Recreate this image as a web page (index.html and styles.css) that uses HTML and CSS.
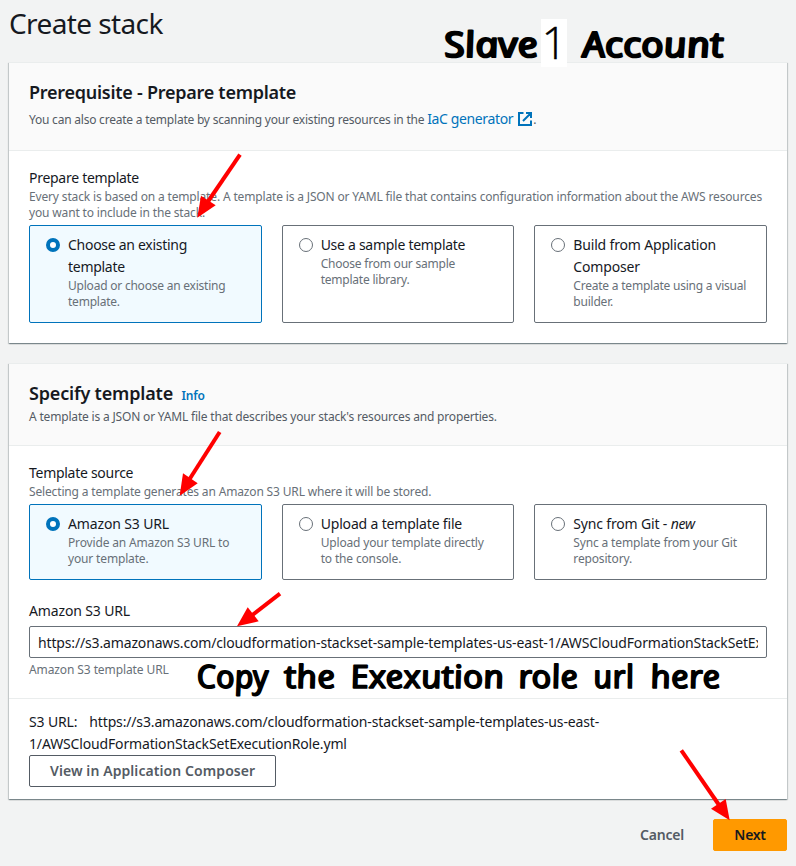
FILE: index.html
```html
<!DOCTYPE html>
<html lang="en">
<head>
<meta charset="utf-8">
<title>Create stack</title>
<link rel="stylesheet" href="styles.css">
</head>
<body>
<main class="page">
  <h1>Create stack</h1>

  <section class="panel">
    <header class="panel-header first">
      <h2>Prerequisite - Prepare template</h2>
      <p class="lead tall">You can also create a template by scanning your existing resources in the <a class="link">IaC generator</a><svg class="external" viewBox="0 0 16 16" width="16" height="16"><path d="M6.500 2H2v12h12V9.500M9 2h5v5M6 10 13.500 2.500"/></svg>.</p>
    </header>
    <div class="panel-body">
      <div class="label">Prepare template</div>
      <div class="hint intro">Every stack is based on a template. A template is a JSON or YAML file that contains configuration information about the AWS resources you want to include in the stack.</div>
      <div class="tiles">
        <label class="tile selected"><span class="radio"></span><span class="tile-text"><span class="tile-title">Choose an existing template</span><span class="hint">Upload or choose an existing template.</span></span></label>
        <label class="tile"><span class="radio"></span><span class="tile-text"><span class="tile-title">Use a sample template</span><span class="hint">Choose from our sample template library.</span></span></label>
        <label class="tile"><span class="radio"></span><span class="tile-text"><span class="tile-title wide">Build from Application Composer</span><span class="hint">Create a template using a visual builder.</span></span></label>
      </div>
    </div>
  </section>

  <section class="panel">
    <header class="panel-header">
      <h2 class="specify">Specify template <a class="info">Info</a></h2>
      <p class="lead">A template is a JSON or YAML file that describes your stack's resources and properties.</p>
    </header>
    <div class="panel-body">
      <div class="label">Template source</div>
      <div class="hint intro">Selecting a template generates an Amazon S3 URL where it will be stored.</div>
      <div class="tiles">
        <label class="tile selected"><span class="radio"></span><span class="tile-text"><span class="tile-title url">Amazon S3 URL</span><span class="hint intro">Provide an Amazon S3 URL to your template.</span></span></label>
        <label class="tile"><span class="radio"></span><span class="tile-text"><span class="tile-title wide">Upload a template file</span><span class="hint intro">Upload your template directly<br>to the console.</span></span></label>
        <label class="tile"><span class="radio"></span><span class="tile-text"><span class="tile-title wide">Sync from Git - <em>new</em></span><span class="hint intro">Sync a template from your Git repository.</span></span></label>
      </div>
      <div class="field">
        <div class="label url">Amazon S3 URL</div>
        <input class="input" type="text" value="https://s3.amazonaws.com/cloudformation-stackset-sample-templates-us-east-1/AWSCloudFormationStackSetExecutionRole.yml">
        <div class="hint note">Amazon S3 template URL</div>
      </div>
    </div>
    <footer class="panel-footer">
      <div class="s3"><span class="s3-label">S3 URL:</span>https://s3.amazonaws.com/cloudformation-stackset-sample-templates-us-east-<br>1/AWSCloudFormationStackSetExecutionRole.yml</div>
      <button class="button">View in Application Composer</button>
    </footer>
  </section>

  <div class="actions">
    <button class="button plain">Cancel</button>
    <button class="button primary">Next</button>
  </div>
</main>

<svg class="notes" viewBox="0 0 796 866" width="796" height="866">
  <rect x="541" y="19" width="26" height="48" fill="#fff"/>
  <g class="marker big">
    <text transform="translate(446 57) skewX(12)" textLength="94" lengthAdjust="spacingAndGlyphs">Slave</text>
    <text transform="translate(584 57) skewX(10)" textLength="141" lengthAdjust="spacingAndGlyphs">Account</text>
  </g>
  <text class="digit" x="541.500" y="59">1</text>
  <g class="marker">
    <text transform="translate(198 688) skewX(10)" textLength="72" lengthAdjust="spacingAndGlyphs">Copy</text>
    <text transform="translate(286 688) skewX(12)" textLength="51" lengthAdjust="spacingAndGlyphs">the</text>
    <text transform="translate(352 688) skewX(12)" textLength="154" lengthAdjust="spacingAndGlyphs">Exexution</text>
    <text transform="translate(520 688) skewX(12)" textLength="60" lengthAdjust="spacingAndGlyphs">role</text>
    <text transform="translate(595 688) skewX(12)" textLength="41" lengthAdjust="spacingAndGlyphs">url</text>
    <text transform="translate(652 688) skewX(12)" textLength="70" lengthAdjust="spacingAndGlyphs">here</text>
  </g>
  <g class="arrows">
    <path d="M240 154.700 207 203"/><polygon points="197.300,217.700 201,195.700 215.700,205.300"/>
    <path d="M219.700 432 189 480"/><polygon points="179.700,495.700 183,473.300 197.700,483.300"/>
    <path d="M280 593.700 251 616"/><polygon points="237,626.300 247.700,607.300 258.700,621.300"/>
    <path d="M681.300 750.300 719 805"/><polygon points="729.700,820.300 711,808.700 725.700,799"/>
  </g>
</svg>
</body>
</html>
```
FILE: styles.css
```css
* { box-sizing: border-box; }
body {
  margin: 0;
  background: #f2f3f3;
  color: #16191f;
  font: 14px/22px "Noto Sans", "Open Sans", sans-serif;
  letter-spacing: -0.28px;
}
.page { padding: 5px 9px 0; height: 866px; overflow: hidden; }
h1 { margin: 0 0 21px; font-size: 28px; line-height: 36px; font-weight: 400; letter-spacing: -0.6px; }
h2 { margin: 0; font-size: 18px; line-height: 22px; font-weight: 600; letter-spacing: -0.26px; }
h2.specify { height: 22px; letter-spacing: -0.18px; }
p { margin: 0; }

.panel {
  margin-bottom: 20px;
  background: #fff;
  border-top: 1px solid #eaeded;
  box-shadow: 0 1px 1px 0 rgba(0,28,36,.3), 1px 1px 1px 0 rgba(0,28,36,.15), -1px 1px 1px 0 rgba(0,28,36,.15);
}
.panel-header { padding: 18px 20px 20px; background: #fafafa; border-bottom: 1px solid #eaeded; }
.panel-header.first { padding-bottom: 19px; }
.lead { margin-top: 5px; font-size: 12px; line-height: 16px; color: #545b64; letter-spacing: -0.18px; }
.lead.tall { line-height: 22px; letter-spacing: -0.22px; }
.link { color: #0073bb; font-size: 14px; letter-spacing: -0.37px; }
.external { margin-left: 4px; vertical-align: -3px; fill: none; stroke: #0073bb; stroke-width: 2; }
.info { margin-left: 4px; color: #0073bb; font-size: 12px; font-weight: 600; }

.panel-body { padding: 16px 20px 20px; }
.hint { display: block; font-size: 12px; line-height: 16px; color: #687078; letter-spacing: -0.22px; }
.hint.intro { letter-spacing: -0.156px; }
.hint.note { letter-spacing: -0.1px; }
.tiles { display: grid; grid-template-columns: repeat(3, 1fr); gap: 20px; margin-top: 4px; }
.tile { display: flex; gap: 8px; padding: 8px 16px 12px; border: 1px solid #687078; border-radius: 2px; background: #fff; }
.tile.selected { border-color: #0073bb; background: #f1faff; }
.tile-text { flex: 1; }
.tile-title { display: block; }
.url { letter-spacing: -0.14px; }
.wide { letter-spacing: -0.17px; }
.radio { flex: none; width: 14px; height: 14px; margin-top: 4px; border: 1px solid #687078; border-radius: 50%; background: #fff; }
.selected .radio { border: 4px solid #0073bb; }

.field { margin-top: 20px; }
.input {
  display: block; width: 100%; height: 32px; margin: 4px 0; padding: 4px 8px;
  border: 1px solid #687078; border-radius: 2px; background: #fff;
  color: inherit; font: inherit; letter-spacing: -0.15px;
}
.panel-footer { padding: 12px 20px; border-top: 1px solid #eaeded; }
.s3 { letter-spacing: -0.15px; }
.s3-label { margin-right: 12px; }

.button {
  display: block; height: 32px; padding: 0 20px;
  border: 1px solid #545b64; border-radius: 2px; background: #fff; color: #545b64;
  font: 600 14px/22px "Noto Sans", "Open Sans", sans-serif; letter-spacing: 0.08px;
}
.actions { display: flex; justify-content: flex-end; gap: 8px; }
.button.plain { border-color: transparent; background: transparent; letter-spacing: -0.2px; }
.button.primary { width: 74px; border-color: #ff9900; background: #ff9900; color: #16191f; letter-spacing: -0.3px; }

.notes { position: absolute; left: 0; top: 0; pointer-events: none; letter-spacing: 0; }
.marker { font: italic 400 32px "Noto Sans", sans-serif; fill: #000; stroke: #000; stroke-width: 1.5; stroke-linejoin: round; }
.marker.big { font-size: 35px; stroke-width: 2; }
.digit { font: 300 45px "Open Sans", sans-serif; stroke: #000; stroke-width: 0.4; }
.arrows path { fill: none; stroke: #f00; stroke-width: 4; }
.arrows polygon { fill: #f00; }
```
